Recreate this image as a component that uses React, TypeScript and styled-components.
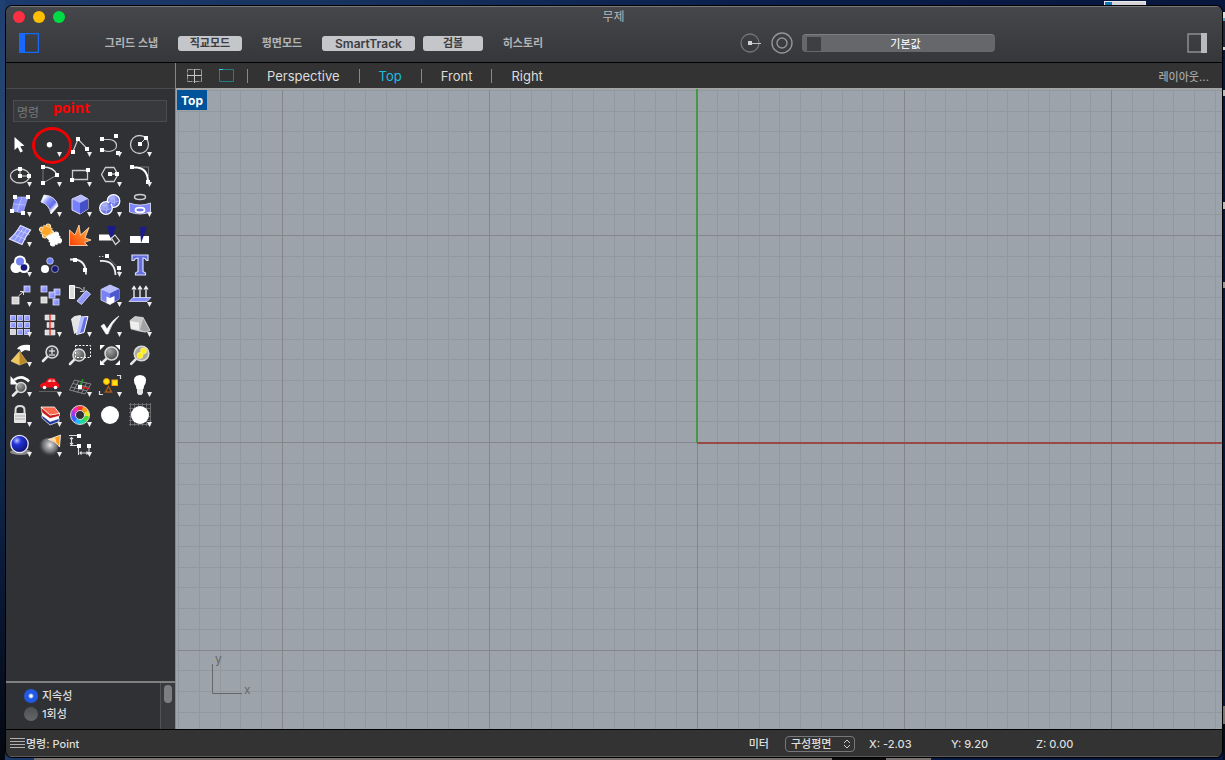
import React from "react";
import styled, { createGlobalStyle } from "styled-components";

const GlobalStyle = createGlobalStyle`
  * { box-sizing: border-box; }
  body {
    margin: 0;
    background: #0a1a3c;
    font-family: Inter, "Noto Sans CJK KR", sans-serif;
    font-size: 11px;
    line-height: 16px;
    color: #dedede;
  }
  button, input, select { font: inherit; color: inherit; }
`;

/* ---------- desktop and window frame ---------- */

const Desktop = styled.div`
  position: relative;
  display: flex;
  min-height: 100vh;
  padding: 6px 3px 3px 6px;
  background: linear-gradient(90deg, #1c3a6c 0, #17335f 25%, #0a1f4c 60%, #07163c 100%);
`;

const LeftEdge = styled.div`
  position: absolute;
  left: 0;
  top: 0;
  bottom: 0;
  width: 5px;
  background: linear-gradient(#1f3f70, #294a6e 25%, #16335a 50%, #0a1a38 75%, #04080f);
`;

const BehindTop = styled.div`
  position: absolute;
  right: 79px;
  top: 1px;
  width: 42px;
  height: 5px;
  background: linear-gradient(90deg, #1272b8 7px, #d3d3d8 7px);
  border: 1px solid #e8e8ec;
`;

const BehindRight = styled.div`
  position: absolute;
  right: 0;
  top: 12px;
  bottom: 0;
  width: 2px;
  background: linear-gradient(
    #d8dde2 6px, #4fa3c7 6px, #4fa3c7 9px, #22283a 9px, #22283a 35px, #d8d8d8 35px, #d8d8d8 38px,
    #07163c 38px, #07163c 78px, #bbb 78px, #bbb 84px, #07163c 84px, #07163c 190px, #bbb 190px, #bbb 197px,
    #07163c 197px, #07163c 270px, #999 270px, #999 276px, #07163c 276px, #07163c 694px, #777 694px, #777 712px,
    #040c1c 712px
  );
`;

const BehindBottom = styled.div`
  position: absolute;
  left: 34px;
  right: 24%;
  bottom: 0;
  height: 2px;
  background: linear-gradient(90deg, #77716f 89%, #0c0c0c 89%, #0c0c0c 95%, #77716f 95%);
`;

const Window = styled.main`
  position: relative;
  flex: 1;
  display: flex;
  flex-direction: column;
  overflow: hidden;
  border-radius: 6px;
  background: #333;
  box-shadow: 0 0 0 1px #000;
`;

/* ---------- title bar and toolbar ---------- */

const Header = styled.header`
  height: 57px;
  background: linear-gradient(#46474b, #36373a);
  border-top: 1px solid #77787b;
  border-bottom: 1px solid #000;
`;

const TitleBar = styled.div`
  display: grid;
  grid-template-columns: 1fr auto 1fr;
  align-items: center;
  height: 20px;
  padding: 0 8px 0 7px;
`;

const Lights = styled.div`
  display: flex;
  gap: 8px;
`;

const Light = styled.button<{ $color: string }>`
  width: 12px;
  height: 12px;
  padding: 0;
  border: 0;
  border-radius: 50%;
  background: ${(p) => p.$color};
`;

const Title = styled.h1`
  margin: 0;
  font-size: 12px;
  font-weight: 400;
  color: #b5b6b8;
`;

const Toolbar = styled.div`
  display: flex;
  align-items: center;
  height: 32px;
  padding: 0 15px 0 13px;
`;

const IconButton = styled.button`
  display: block;
  padding: 0;
  border: 0;
  background: none;
  line-height: 0;
`;

const Modes = styled.div`
  display: flex;
  gap: 8px;
  margin-left: 54px;
`;

const ModeButton = styled.button<{ $on?: boolean; $width: number; $latin?: boolean }>`
  width: ${(p) => p.$width}px;
  height: 15px;
  padding: 0;
  border: 0;
  border-radius: 3px;
  font-size: ${(p) => (p.$latin ? 12 : 11)}px;
  line-height: 15px;
  font-weight: 600;
  white-space: nowrap;
  background: ${(p) => (p.$on ? "#c5c6ca" : "transparent")};
  color: ${(p) => (p.$on ? "#3c3d41" : "#b3b4b7")};
`;

const OsnapTools = styled.div`
  display: flex;
  align-items: center;
  gap: 9px;
  margin-left: auto;
`;

const LayerButton = styled.button`
  display: flex;
  align-items: center;
  width: 193px;
  height: 18px;
  margin: 0 192px 0 0;
  padding: 0 5px;
  border: 0;
  border-top: 1px solid #7c7d80;
  border-radius: 4px;
  background: #66676b;
  color: #efefef;
  font-weight: 500;
`;

const Swatch = styled.span`
  width: 14px;
  height: 14px;
  background: #3e3f42;
`;

const LayerName = styled.span`
  flex: 1;
  text-align: center;
`;

/* ---------- body ---------- */

const Body = styled.div`
  flex: 1;
  display: flex;
  min-height: 0;
`;

const Sidebar = styled.aside`
  display: flex;
  flex-direction: column;
  width: 170px;
  background: #303135;
  border-right: 1px solid #85878a;
`;

const SidebarHead = styled.div`
  height: 26px;
  background: #333;
  border-bottom: 1px solid #4b4b4c;
`;

const CommandBox = styled.div`
  position: relative;
  margin: 11px 8px 8px 7px;
`;

const CommandInput = styled.input`
  display: block;
  width: 100%;
  height: 22px;
  padding: 2px 3px 0;
  border: 1px solid #4a4b4e;
  background: #38393c;
  outline: 0;
  font-size: 12px;
  &::placeholder { color: #77787b; opacity: 1; }
`;

const Annotation = styled.span`
  position: absolute;
  left: 40px;
  top: 0;
  color: #f00;
  font-family: "Open Sans", sans-serif;
  font-size: 14px;
  font-weight: 700;
  pointer-events: none;
`;

const ToolGrid = styled.div`
  position: relative;
  display: grid;
  grid-template-columns: repeat(5, 30px);
  grid-auto-rows: 30px;
  margin-left: -1px;
`;

const Highlight = styled.span`
  position: absolute;
  left: 27px;
  top: -3px;
  width: 40px;
  height: 37px;
  border: 3px solid #f00000;
  border-radius: 50%;
  pointer-events: none;
`;

const Options = styled.div`
  display: flex;
  height: 48px;
  margin-top: auto;
  border-top: 2px solid #7f8180;
`;

const OptionList = styled.fieldset`
  flex: 1;
  display: flex;
  flex-direction: column;
  gap: 2px;
  margin: 0;
  padding: 5px 0 0 18px;
  border: 0;
`;

const Option = styled.label`
  display: flex;
  align-items: center;
  gap: 4px;
  font-weight: 500;
`;

const Radio = styled.input`
  appearance: none;
  width: 14px;
  height: 14px;
  margin: 0;
  border-radius: 50%;
  background: linear-gradient(#505154, #646568);
  &:checked { background: radial-gradient(circle, #fff 1px, #2259e4 3px); }
`;

const ScrollTrack = styled.div`
  width: 15px;
  padding: 2px 3px;
  background: #3a3b3e;
  border-left: 1px solid #515255;
`;

const ScrollThumb = styled.div`
  width: 8px;
  height: 18px;
  border-radius: 4px;
  background: #7d7e82;
`;

const Main = styled.section`
  flex: 1;
  display: flex;
  flex-direction: column;
  min-width: 0;
`;

const ViewTabs = styled.nav`
  display: flex;
  align-items: center;
  height: 26px;
  padding: 0 13px 0 11px;
  background: #333;
  border-bottom: 1px solid #a5a49f;
`;

const LayoutIcons = styled.div`
  display: flex;
  gap: 17px;
  margin-right: 13px;
`;

const ViewTab = styled.button<{ $active?: boolean }>`
  height: 14px;
  padding: 0 19px;
  border: 0;
  border-left: 1px solid #87888a;
  background: none;
  font-size: 13px;
  line-height: 14px;
  color: ${(p) => (p.$active ? "#16bfe0" : "#dcdcdc")};
`;

const LayoutButton = styled.button`
  margin-left: auto;
  padding: 2px 0 0;
  border: 0;
  background: none;
  font-size: 11px;
  font-weight: 500;
  color: #a5a5a5;
`;

const Viewport = styled.div`
  position: relative;
  flex: 1;
  overflow: hidden;
  background: #9da3aa;
`;

const GridCanvas = styled.svg`
  position: absolute;
  inset: 0;
  width: 100%;
  height: 100%;
`;

const ViewName = styled.span`
  position: absolute;
  left: 1px;
  top: 1px;
  height: 20px;
  padding: 0 4px;
  background: #00529a;
  color: #fff;
  font-size: 12px;
  line-height: 22px;
  font-weight: 700;
`;

const AxisMark = styled.svg`
  position: absolute;
  left: 34px;
  bottom: 31px;
`;

/* ---------- status bar ---------- */

const StatusBar = styled.footer`
  display: flex;
  align-items: center;
  height: 28px;
  padding: 1px 0 0 4px;
  border-top: 1px solid #000;
  border-bottom: 1px solid #5a5a5a;
  font-weight: 500;
`;

const CommandStatus = styled.span`
  margin: 0 auto 0 1px;
`;

const SelectBox = styled.div`
  position: relative;
  margin: 0 14px 0 16px;
`;

const PlaneSelect = styled.select`
  appearance: none;
  display: block;
  width: 70px;
  height: 16px;
  padding: 0 5px;
  border: 1px solid #77787a;
  border-radius: 4px;
  background: none;
  line-height: 14px;
`;

const SelectArrows = styled.svg`
  position: absolute;
  right: 4px;
  top: 3px;
  pointer-events: none;
`;

const Coordinate = styled.span<{ $width: number }>`
  width: ${(p) => p.$width}px;
`;

/* ---------- tool icons, each drawn in a 30 x 30 cell ---------- */

const Node = ({ at, color = "#fff" }: { at: [number, number][]; color?: string }) => (
  <>
    {at.map(([x, y]) => (
      <rect key={`${x}-${y}`} x={x - 2} y={y - 2} width="4" height="4" fill={color} stroke="none" />
    ))}
  </>
);

const Lens = ({ cx, cy, r = 6, fill = "url(#lens)" }: { cx: number; cy: number; r?: number; fill?: string }) => (
  <>
    <path d={`M${cx - r * 0.7} ${cy + r * 0.7}L${cx - r - 3} ${cy + r + 3}`} stroke="#e8e8e8" strokeWidth="2.6" strokeLinecap="round" />
    <circle cx={cx} cy={cy} r={r} fill={fill} stroke="#d8d8d8" strokeWidth="1.6" />
  </>
);

const Puzzle = ({ x, y, fill, stroke }: { x: number; y: number; fill: string; stroke: string }) => (
  <g transform={`translate(${x} ${y}) rotate(20)`}>
    <g stroke={stroke}>
      <circle cx="0" cy="-5" r="2.300" fill={fill} />
      <circle cx="5" cy="0" r="2.300" fill={fill} />
      <circle cx="-5" cy="0" r="2.300" fill={fill} />
      <circle cx="0" cy="5" r="2.300" fill={fill} />
      <path d="M-4.500-4.500h9v9h-9z" strokeWidth=".5" fill={fill} />
    </g>
    <path d="M-3.500-3.500h7v7h-7z" fill={fill} />
  </g>
);

const Tile = ({ x, y, s = 6, grey }: { x: number; y: number; s?: number; grey?: boolean }) => (
  <rect x={x} y={y} width={s} height={s} fill={grey ? "#d5d5d5" : "url(#tile)"} stroke={grey ? "#f4f4f4" : "#d7daff"} strokeWidth=".8" />
);

type Tool = { name: string; menu?: boolean; art: React.ReactNode };

const tools: Tool[] = [
  { name: "Select", art: <path d="M9.500 7v13l3.200-2.800 2.600 5.300 2.600-1.200-2.600-5 4.200-.5z" fill="#fff" /> },
  { name: "Point", menu: true, art: <circle cx="14.500" cy="14.700" r="2.700" fill="#fff" /> },
  {
    name: "Polyline", menu: true,
    art: <><path d="M8 21.500L13 9l9 9.700" stroke="#ccc" strokeWidth="1.200" /><Node at={[[8, 22], [13, 9], [22, 19]]} /></>,
  },
  {
    name: "Curve", menu: true,
    art: <><path d="M7 9.500h7c9.500 0 10.500 11.500 0 12q-4 0-7-2" stroke="#ccc" strokeWidth="1.200" /><Node at={[[7, 9], [21, 6], [7, 20], [23, 23]]} /></>,
  },
  {
    name: "Circle", menu: true,
    art: <><circle cx="14.500" cy="14.500" r="9" stroke="#ccc" strokeWidth="1.300" /><path d="M15 14l6-6" stroke="#ddd" /><Node at={[[15, 14], [21, 8]]} /></>,
  },
  {
    name: "Ellipse", menu: true,
    art: <><ellipse cx="15" cy="16" rx="9.500" ry="7" stroke="#ccc" strokeWidth="1.300" /><path d="M15 9v7h9" stroke="#ddd" /><Node at={[[15, 9], [15, 16], [24, 16]]} /></>,
  },
  {
    name: "Arc", menu: true,
    art: <><path d="M8 23V7" stroke="#77787a" /><path d="M8 23l14-8" stroke="#999" /><path d="M8 7q11 0 14 8" stroke="#ddd" strokeWidth="1.300" /><Node at={[[8, 7], [22, 15], [8, 23]]} /></>,
  },
  {
    name: "Rectangle", menu: true,
    art: <><path d="M7.500 10.500h15v9h-15z" stroke="#ccc" strokeWidth="1.300" /><Node at={[[23, 10], [7, 20]]} /></>,
  },
  {
    name: "Polygon", menu: true,
    art: <><path d="M6.500 14.500l4-7h8.500l4 7-4 7h-8.500z" stroke="#ccc" strokeWidth="1.300" /><path d="M15 14h7" stroke="#fff" /><Node at={[[15, 14], [22, 14]]} /></>,
  },
  {
    name: "Fillet", menu: true,
    art: <><path d="M15 7h8.500v9" stroke="#77787a" /><path d="M7 7.500h5q11 1 11 15" stroke="#fff" strokeWidth="2" /><Node at={[[7, 7], [23, 22]]} /></>,
  },
  {
    name: "Surface from points", menu: true,
    art: <><path d="M10 7h13l-5 16-11-2z" fill="url(#blue)" stroke="#c4c8ff" strokeWidth=".6" /><path d="M8.500 14l12 1M17 7l-5 15" stroke="#c8ccff" strokeWidth=".7" /><Node at={[[10, 7], [23, 7], [7, 21], [18, 23]]} /></>,
  },
  {
    name: "Loft", menu: true,
    art: <><path d="M9 5q12 1 14 11l-7 8q-2-10-10-12z" fill="url(#band)" stroke="#f4f4ff" strokeWidth=".8" /></>,
  },
  {
    name: "Box", menu: true,
    art: <><path d="M7 9l9-4 7 4v10l-8 5-8-4z" fill="#7680ff" stroke="#e6e6fa" /><path d="M7 9l9-4 7 4-8 4z" fill="#b6bbff" /><path d="M15 13l8-4v10l-8 5z" fill="#4350c8" /></>,
  },
  {
    name: "Boolean union", menu: true,
    art: <><circle cx="18.500" cy="11" r="6.300" fill="url(#ball)" stroke="#fff" strokeWidth="1.300" /><circle cx="11" cy="18" r="6.300" fill="url(#ball)" stroke="#fff" strokeWidth="1.300" /><path d="M14.500 14.500q2-3.500 0-.5" stroke="#6b76e6" strokeWidth="2" /><path d="M13 11q5 3 11 0M18.500 5.500q2.500 6 0 11M5.500 18.500q5 3 11 0M11 12.500q2.500 6 0 11" stroke="#c3c8ff" strokeWidth=".6" /></>,
  },
  {
    name: "Project curve", menu: true,
    art: <><ellipse cx="15" cy="7" rx="5.500" ry="2.500" stroke="#ccc" strokeWidth="1.500" /><path d="M4.500 13q10.500 4 21 0v9q-10.500 4-21 0z" fill="#7c86f6" stroke="#e6e6fa" strokeWidth=".8" /><ellipse cx="15" cy="20" rx="4.500" ry="2.300" fill="#6f78ee" stroke="#fff" strokeWidth="1.800" /></>,
  },
  {
    name: "Surface tools", menu: true,
    art: <><path d="M15.500 5.500l10 4.500q-5 6-8.500 14.500L4.500 19q6-5 11-13.500z" fill="url(#blue)" stroke="#dfe0ff" strokeWidth="1.200" /><path d="M9 14.500l12 5M12.500 10l12 4.500M19 7q-5 7-10 14M22 8.500q-5 7-9 14.500" stroke="#d4d7ff" strokeWidth=".7" /></>,
  },
  {
    name: "Options",
    art: <><Puzzle x={11.500} y={11} fill="#ffa62a" stroke="#fff0d0" /><Puzzle x={19.500} y={19} fill="#fff" stroke="#fff" /></>,
  },
  {
    name: "Explode",
    art: <path d="M4.500 25.500V10l5.500 5 4-10 1.500 10L24 7.500 20 18l6 2-6.500 2.500 3 3z" fill="url(#fire)" stroke="#ffe3c8" strokeWidth=".8" />,
  },
  {
    name: "Trim",
    art: <><path d="M4 14.500h10l3 6H4z" fill="#fff" /><path d="M12.500 6H21l-4 14-3-6z" fill="#1c1b8c" /><path d="M16.500 18l3.500-3 4.500 6-4 3.500z" fill="#303135" stroke="#d8d8d8" strokeWidth="1.200" /></>,
  },
  {
    name: "Split",
    art: <><path d="M5 16h19v7H5z" fill="#fff" /><path d="M15 7h7l-6 16z" fill="#1c1b8c" /></>,
  },
  {
    name: "Group", menu: true,
    art: <><g fill="#fff"><circle cx="15" cy="11.500" r="6" /><circle cx="11" cy="17.500" r="5.500" /><circle cx="19" cy="17.500" r="5.500" /></g><circle cx="15" cy="11.500" r="4" fill="#7480f5" /><circle cx="19" cy="17.500" r="3.300" fill="#17177a" /></>,
  },
  {
    name: "Ungroup",
    art: <><circle cx="15" cy="11" r="3.300" fill="#7080f5" stroke="#c9ceff" strokeWidth=".8" /><circle cx="10" cy="19" r="4" fill="#fff" /><circle cx="20" cy="19" r="3.500" fill="#17177a" stroke="#aab" strokeWidth=".8" /></>,
  },
  {
    name: "Edit points",
    art: <><path d="M5 9.500h5q11 1 11 15" stroke="#eee" strokeWidth="1.800" /><Node at={[[10, 10], [20, 20]]} /></>,
  },
  {
    name: "Control points", menu: true,
    art: <><path d="M5 11q15-1 15.500 14" stroke="#eee" strokeWidth="1.800" /><path d="M4 6.500h8l12 12v6" stroke="#bbb" strokeDasharray="1.500 1.500" /><Node at={[[12, 6], [24, 18]]} /></>,
  },
  {
    name: "Text",
    art: <><path d="M7 5h16v5.500h-1.500Q20.500 8 18 8v13.500l2.500 1.500v2h-10v-2l2.500-1.500V8q-3 0-4 2.500H7z" fill="#6570e0" stroke="#d9dcff" strokeWidth="1.200" /></>,
  },
  {
    name: "Move", menu: true,
    art: <><Tile x={7} y={17} s={7} grey /><Tile x={19} y={6} /><path d="M13.500 16l5-4.500M15 11.500h3.500V15" stroke="#ddd" /></>,
  },
  {
    name: "Copy",
    art: <><Tile x={6} y={6} /><Tile x={19} y={9} /><Tile x={14} y={12} /><Tile x={6} y={17} grey /><Tile x={18} y={19} /></>,
  },
  {
    name: "Rotate",
    art: <><path d="M4.500 5.500h5v13h-5z" fill="#ddd" stroke="#fff" /><path d="M12 21l9-10.500 4.500 3.500-9 10.500z" fill="url(#tile)" stroke="#e6e8ff" strokeWidth=".8" /><path d="M10 7q6 0 8.500 4M19 7v4.500h-4" stroke="#ccc" /></>,
  },
  {
    name: "Solid edit", menu: true,
    art: <><path d="M6 9.500L15 5l9 4v10l-9 5.500-9-4.500z" fill="#7882f5" stroke="#dfe1ff" strokeWidth=".8" /><path d="M6 9.500L15 5l9 4-9 4.500z" fill="#b9beff" /><path d="M15 13.500L24 9v10l-9 5.500z" fill="#4c58cd" /><path d="M11.500 16.500l3.500 1.500 4.500-2v6L15 24.500l-3.500-1.500z" fill="#fff" /></>,
  },
  {
    name: "Extrude", menu: true,
    art: <><path d="M4 21.500l4-4h18l-4 4z" fill="#8790ff" stroke="#dfe1ff" strokeWidth=".8" /><path d="M9 18V7m6 11V7m6 11V7M7 9.500L9 6.500l2 3m2 0l2-3 2 3m2 0l2-3 2 3" stroke="#eee" strokeWidth="1.300" /></>,
  },
  {
    name: "Array", menu: true,
    art: <>{[5, 12, 19].map((y) => [5, 12, 19].map((x) => <Tile key={`${x}${y}`} x={x + 0.5} y={y + 0.5} s={5} grey={x === 5 && y === 19} />))}</>,
  },
  {
    name: "Align", menu: true,
    art: <><path d="M10 5h10v5H10zM12 12.500h7v5h-7zM10 20h10v5H10z" fill="#ddd" stroke="#f4f4f4" strokeWidth=".6" /><path d="M15 4v21" stroke="#ee2020" strokeWidth="1.300" /></>,
  },
  {
    name: "Shear", menu: true,
    art: <><path d="M6.500 9l3-2.500 6-1v14l-6 4z" fill="#e4e4e4" stroke="#fff" strokeWidth=".8" /><path d="M15.500 7l7.500-.5-4 16-7.500 2z" fill="#6370e4" stroke="#fff" /><path d="M15.500 7l4-.3-4.500 16.500-3.500 1z" fill="#b9bfff" /></>,
  },
  { name: "Check", menu: true, art: <path d="M6 16l3-2 3 5Q17 10 24 6q-8 8-11 18h-2z" fill="#fff" stroke="#fff" strokeWidth=".6" /> },
  {
    name: "Block", menu: true,
    art: <><path d="M5 10.500l5-4 8 1 7 13-5 1.500-6-1-8-2z" fill="#c8c8c8" stroke="#eee" strokeWidth=".6" /><path d="M5 11l9 1.500V20l-8-1.500z" fill="#efefef" /><path d="M18 7.500l7 13-5 1.500-5.500-2z" fill="#a2a2a2" stroke="#ddd" strokeWidth=".6" /></>,
  },
  {
    name: "Analyze", menu: true,
    art: <><path d="M6 21l8.500-9.500L22 22l-7.500 3z" fill="#f0c860" stroke="#f7dfa0" strokeWidth=".6" /><path d="M14.500 11.500L22 22l-7.500 3z" fill="#b98a28" /><path d="M12 9q3-5 13-4v6l-5-1-4 2.500-1-3z" fill="#fff" /></>,
  },
  {
    name: "Zoom",
    art: <><Lens cx={17} cy={12} r={6} fill="#454649" /><path d="M14 11h6M17 8v6m-3 1h6" stroke="#fff" /></>,
  },
  {
    name: "Zoom window",
    art: <><Lens cx={14} cy={15} r={6} /><path d="M10.500 5.500h15v12h-15z" stroke="#fff" strokeDasharray="2 1.500" /></>,
  },
  {
    name: "Zoom extents",
    art: <><Lens cx={16.500} cy={13.500} r={6.500} /><path d="M5 5h5l-5 5zm20 0v5l-5-5zM5 25v-5l5 5zm20 0h-5l5-5z" fill="#fff" /></>,
  },
  {
    name: "Zoom selected",
    art: <><Lens cx={16.500} cy={13.500} r={7.300} fill="#a8a8a0" /><circle cx="15" cy="15.500" r="3" fill="#ffee16" stroke="#fff8a0" strokeWidth=".6" /><circle cx="18.500" cy="11" r="3" fill="#ffee16" stroke="#fff8a0" strokeWidth=".6" /></>,
  },
  {
    name: "Undo view", menu: true,
    art: <><Lens cx={16} cy={17.500} r={5} /><path d="M24 11.500Q17 4 9 10" stroke="#fff" strokeWidth="2.600" /><path d="M5.500 6v8.500h7.500z" fill="#fff" /></>,
  },
  {
    name: "Right view", menu: true,
    art: <><path d="M5 15q1-2 5-2.500L13 8.500q4-1 7 0l2 4q3 1 2.500 5H5.500z" fill="#ee1018" /><path d="M12.500 12l1.500-2.500h2.500V12zm5 0V9.500h1.500l1.500 2.500z" fill="#ffb4b4" /><circle cx="9.500" cy="17.500" r="1.800" fill="#fff" /><circle cx="20.500" cy="17.500" r="1.800" fill="#fff" /><path d="M4 21.500h22" stroke="#606164" /></>,
  },
  {
    name: "Construction plane", menu: true,
    art: <><path d="M9.500 10l16.500 4-6 10-15.500-4zM8 13.500l16 4M6 17l16 4M13.500 11l-5 10M17.500 12l-5 10.500M21.500 13l-5 10.500" stroke="#999" strokeWidth=".8" /><path d="M15 16l3-7" stroke="#18a420" strokeWidth="1.500" /><path d="M15 17l10 2" stroke="#e01818" strokeWidth="1.500" /><Node at={[[15, 17]]} /></>,
  },
  {
    name: "Object snap", menu: true,
    art: <><circle cx="11.500" cy="11.500" r="3" fill="#ffe612" stroke="#ff9b00" /><rect x="17" y="10" width="5.500" height="5.500" fill="#ffe612" stroke="#ff9b00" /><path d="M10.500 22h6l-3-5.500z" stroke="#a85a12" strokeWidth="1.500" /><path d="M22 5.500h3.500V9M4.500 21v3.500H8" stroke="#ddd" strokeWidth="1.200" /></>,
  },
  {
    name: "Lights", menu: true,
    art: <><path d="M11.500 19q0-3-2-5.500-2.500-8 5.500-8.500 8 .5 5.500 8.500-2 2.500-2 5.500z" fill="#fff" /><path d="M12 19h6v4l-1.500 2h-3L12 23z" fill="#e4e4e4" /></>,
  },
  {
    name: "Lock", menu: true,
    art: <><path d="M10.500 14v-4q0-4 4.500-4t4.500 4v4" stroke="#ddd" strokeWidth="2" /><rect x="9" y="13" width="12" height="10" rx="1" fill="#e6e6e6" /><path d="M10 16h10m-10 3h10" stroke="#aaa" /></>,
  },
  {
    name: "Layers", menu: true,
    art: <><path d="M7 15l8 6.500 9-3v3L15 25l-8-7z" fill="#223a9c" stroke="#fff" strokeWidth=".7" /><path d="M6.500 11.500L15 18l9-3v3.500l-9 3-8-6z" fill="#fff" /><path d="M6 7l9 8 9.500-2v3L15 18.500l-8-6z" fill="#c81c18" stroke="#fff" strokeWidth=".6" /><path d="M6 7h13.500l5 6.500L15 15z" fill="#ff6a4c" stroke="#fff" strokeWidth=".8" /></>,
  },
  {
    name: "Materials", menu: true,
    art: <>
      {["#ff3030", "#ff9a18", "#e8e820", "#48df30", "#20d8a0", "#20b8ff", "#4060ff", "#a038f0", "#f030b0"].map((color, i) => (
        <circle key={color} cx="15" cy="15" r="7" stroke={color} strokeWidth="4.600" strokeDasharray="5.200 40" transform={`rotate(${i * 40 - 110} 15 15)`} />
      ))}
      <circle cx="15" cy="15" r="9.500" stroke="#fff" strokeWidth=".8" /><circle cx="15" cy="15" r="4.500" stroke="#fff" strokeWidth=".8" />
    </>,
  },
  { name: "Shade", art: <circle cx="15" cy="15" r="9" fill="#fff" /> },
  {
    name: "Ghosted", menu: true,
    art: <><path d="M4 4.500h22M4 8.500h22M4 12.500h22M4 16.500h22M4 20.500h22M4 24.500h22M5.500 3v23m4-23v23m4-23v23m4-23v23m4-23v23m4-23v23" stroke="#77787a" strokeWidth=".8" /><circle cx="15" cy="15" r="9" fill="#fff" /></>,
  },
  {
    name: "Render", menu: true,
    art: <><ellipse cx="15.500" cy="22" rx="10.500" ry="3" fill="#8a8a8a" /><circle cx="14.500" cy="14" r="8.700" fill="url(#render)" stroke="#e8e8f4" strokeWidth="1.300" /></>,
  },
  {
    name: "Spotlight", menu: true,
    art: <><circle cx="13" cy="18" r="10" fill="url(#beam)" /><path d="M13.500 9.500L25.500 5l-1 12q-4-6-11-7.500z" fill="#ff9d20" stroke="#fff" strokeWidth=".8" /><path d="M15 9.500l5-2 1.500 5q-2-2-6.500-3z" fill="#ffe0b0" /></>,
  },
  {
    name: "Dimension", menu: true,
    art: <><path d="M4 5.500h10M5 15.500h9M6.500 7.500v7M5 9l1.500-1.500L8 9m-3 4l1.500 1.500L8 13M13.500 16v9m10.500-9v9m-9-2h8m-6.500-1.500L15 23l1.500 1.500m5-3L23 23l-1.500 1.500" stroke="#ddd" strokeWidth="1.100" /><Node at={[[14, 6], [14, 16], [24, 16]]} /></>,
  },
];

const PaintDefs = styled.svg`
  position: absolute;
  width: 0;
  height: 0;
`;

const SharedPaints = () => (
  <PaintDefs aria-hidden="true">
    <defs>
      <linearGradient id="blue" x1="0" y1="0" x2="1" y2="1"><stop offset="0" stopColor="#6a75f2" /><stop offset=".5" stopColor="#949cff" /><stop offset="1" stopColor="#6470ee" /></linearGradient>
      <linearGradient id="tile" x1="0" y1="0" x2="1" y2="1"><stop offset="0" stopColor="#b4baff" /><stop offset="1" stopColor="#6f7bf5" /></linearGradient>
      <linearGradient id="band" x1="0" y1="0" x2="1" y2="1"><stop offset=".15" stopColor="#fff" /><stop offset=".35" stopColor="#8d96ff" /><stop offset=".6" stopColor="#5f6be8" /><stop offset=".75" stopColor="#fff" /></linearGradient>
      <linearGradient id="fire" x1="0" y1="1" x2="1" y2="0"><stop offset="0" stopColor="#ff3c00" /><stop offset="1" stopColor="#ffc24a" /></linearGradient>
      <radialGradient id="beam" cx=".6" cy=".35" r=".6"><stop offset="0" stopColor="#e8e8e8" /><stop offset=".6" stopColor="#8a8b8d" stopOpacity=".7" /><stop offset="1" stopColor="#303135" stopOpacity="0" /></radialGradient>
      <radialGradient id="ball" cx=".35" cy=".3" r=".8"><stop offset="0" stopColor="#b3b9ff" /><stop offset="1" stopColor="#4a57d0" /></radialGradient>
      <radialGradient id="render" cx=".35" cy=".3" r=".8"><stop offset="0" stopColor="#b9c4ff" /><stop offset=".3" stopColor="#2433d8" /><stop offset="1" stopColor="#080c60" /></radialGradient>
      <radialGradient id="lens" cx=".35" cy=".3" r=".8"><stop offset="0" stopColor="#a5a5a5" /><stop offset="1" stopColor="#3f4042" /></radialGradient>
    </defs>
  </PaintDefs>
);

const ToolButton = ({ tool }: { tool: Tool }) => (
  <IconButton aria-label={tool.name}>
    <svg width="30" height="30" viewBox="0 0 30 30" fill="none">
      {tool.art}
      {tool.menu && <path d="M22 22h5l-2.500 5z" fill="#eee" />}
    </svg>
  </IconButton>
);

/* ---------- construction grid ---------- */

const ORIGIN = { x: 521, y: 353 };
const CELL = 20.73;

const GridLines = () => {
  const minor: string[] = [];
  const major: string[] = [];
  for (let i = -60; i <= 120; i++) {
    const x = ORIGIN.x + Math.floor(i * CELL);
    const y = ORIGIN.y + Math.round(i * CELL + 0.2);
    const target = i % 10 === 0 ? major : minor;
    target.push(`M${x} 0v4000`, `M0 ${y}h4000`);
  }
  return (
    <GridCanvas aria-hidden="true">
      <g transform="translate(.5 .5)" fill="none" shapeRendering="crispEdges">
        <path d={minor.join("")} stroke="#9198a0" />
        <path d={major.join("")} stroke="#84868e" />
      </g>
      <rect x={ORIGIN.x - 1} y="0" width="2" height={ORIGIN.y + 1} fill="#439a43" />
      <rect x={ORIGIN.x} y={ORIGIN.y} width="4000" height="2" fill="#984a48" />
    </GridCanvas>
  );
};

const modes = [
  { label: "그리드 스냅", width: 77 },
  { label: "직교모드", width: 64, on: true },
  { label: "평면모드", width: 64 },
  { label: "SmartTrack", width: 93, on: true, latin: true },
  { label: "검볼", width: 60, on: true },
  { label: "히스토리", width: 64 },
];

export default function App() {
  return (
    <Desktop>
      <GlobalStyle />
      <SharedPaints />
      <LeftEdge />
      <BehindTop />
      <BehindRight />
      <BehindBottom />
      <Window>
        <Header>
          <TitleBar>
            <Lights>
              <Light $color="#ff2f43" aria-label="닫기" />
              <Light $color="#ffbe00" aria-label="최소화" />
              <Light $color="#00da45" aria-label="확대" />
            </Lights>
            <Title>무제</Title>
          </TitleBar>
          <Toolbar>
            <IconButton aria-label="왼쪽 사이드바">
              <svg width="20" height="20"><path d="M.5.5h19v19H.5z" fill="none" stroke="#1768f5" strokeWidth="1.500" /><path d="M0 0h6v20H0z" fill="#1768ff" /></svg>
            </IconButton>
            <Modes>
              {modes.map((m) => (
                <ModeButton key={m.label} $on={m.on} $width={m.width} $latin={m.latin}>{m.label}</ModeButton>
              ))}
            </Modes>
            <OsnapTools>
              <IconButton aria-label="점 기록">
                <svg width="22" height="22" fill="none"><circle cx="10" cy="11" r="9" stroke="#747578" strokeWidth="1.300" /><path d="M10 11.500h11" stroke="#c0c0c3" /><path d="M8 9h4v4H8z" fill="#d2d2d4" /></svg>
              </IconButton>
              <IconButton aria-label="대상 표시">
                <svg width="22" height="22" fill="none" stroke="#949598" strokeWidth="1.400"><circle cx="11" cy="11" r="10" /><circle cx="11" cy="11" r="5" /></svg>
              </IconButton>
              <LayerButton><Swatch /><LayerName>기본값</LayerName></LayerButton>
            </OsnapTools>
            <IconButton aria-label="오른쪽 사이드바">
              <svg width="20" height="20"><path d="M1 1h18v18H1z" fill="none" stroke="#8d8e91" strokeWidth="1.500" /><path d="M14 0h6v20h-6z" fill="#b9babc" /></svg>
            </IconButton>
          </Toolbar>
        </Header>

        <Body>
          <Sidebar>
            <SidebarHead />
            <CommandBox>
              <CommandInput placeholder="명령" aria-label="명령" />
              <Annotation>point</Annotation>
            </CommandBox>
            <ToolGrid>
              {tools.map((tool) => <ToolButton key={tool.name} tool={tool} />)}
              <Highlight />
            </ToolGrid>
            <Options>
              <OptionList>
                <Option><Radio type="radio" name="persistence" defaultChecked />지속성</Option>
                <Option><Radio type="radio" name="persistence" />1회성</Option>
              </OptionList>
              <ScrollTrack><ScrollThumb /></ScrollTrack>
            </Options>
          </Sidebar>

          <Main>
            <ViewTabs>
              <LayoutIcons>
                <IconButton aria-label="4개 뷰">
                  <svg width="15" height="14" fill="none" stroke="#96979a"><path d="M.5.5h14v12H.5z" strokeDasharray="6 1" /><path d="M7.500 0v14M0 6.500h15" stroke="#c4c4c4" /></svg>
                </IconButton>
                <IconButton aria-label="단일 뷰">
                  <svg width="15" height="14" fill="none" stroke="#277a88"><path d="M.5.500h14v12H.5z" /><path d="M0 .5h4" stroke="#35cde6" /></svg>
                </IconButton>
              </LayoutIcons>
              <ViewTab>Perspective</ViewTab>
              <ViewTab $active>Top</ViewTab>
              <ViewTab>Front</ViewTab>
              <ViewTab>Right</ViewTab>
              <LayoutButton>레이아웃...</LayoutButton>
            </ViewTabs>
            <Viewport>
              <GridLines />
              <ViewName>Top</ViewName>
              <AxisMark width="46" height="46" fill="none">
                <path d="M2.500 12v29.500H32" stroke="#66676a" />
                <text x="5" y="11" fill="#66676a" fontSize="12">y</text>
                <text x="34" y="42" fill="#66676a" fontSize="12">x</text>
              </AxisMark>
            </Viewport>
          </Main>
        </Body>

        <StatusBar>
          <svg width="15" height="11" stroke="#b0b0b0"><path d="M0 .5h15M0 3.500h15M0 6.500h15M0 9.500h15" /></svg>
          <CommandStatus>명령: Point</CommandStatus>
          <span>미터</span>
          <SelectBox>
            <PlaneSelect aria-label="좌표계" defaultValue="cplane">
              <option value="cplane">구성평면</option>
              <option value="world">절대좌표</option>
            </PlaneSelect>
            <SelectArrows width="8" height="10" fill="none" stroke="#d0d0d0"><path d="M1 4l3-3 3 3M1 6l3 3 3-3" /></SelectArrows>
          </SelectBox>
          <Coordinate $width={82}>X: -2.03</Coordinate>
          <Coordinate $width={85}>Y: 9.20</Coordinate>
          <Coordinate $width={186}>Z: 0.00</Coordinate>
        </StatusBar>
      </Window>
    </Desktop>
  );
}
